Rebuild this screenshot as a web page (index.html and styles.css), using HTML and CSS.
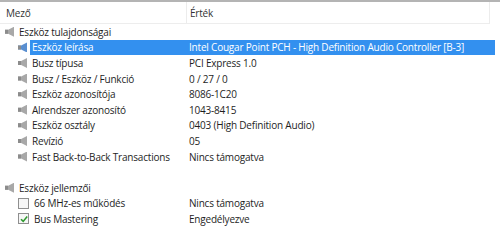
FILE: index.html
```html
<!DOCTYPE html>
<html lang="hu">
<head>
  <meta charset="UTF-8">
  <title>Eszköz tulajdonságai</title>
  <link rel="stylesheet" href="styles.css">
</head>
<body>
  <div class="list">
    <div class="header">
      <div class="col-name">Mező</div>
      <div class="col-value">Érték</div>
    </div>

    <div class="rows">
      <div class="row group">
        <div class="col-name"><span class="icon"></span>Eszköz tulajdonságai</div>
      </div>
      <div class="row child selected">
        <div class="col-name"><span class="icon"></span><span class="label">Eszköz leírása</span></div>
        <div class="col-value">Intel Cougar Point PCH - High Definition Audio Controller [B-3]</div>
      </div>
      <div class="row child">
        <div class="col-name"><span class="icon"></span>Busz típusa</div>
        <div class="col-value">PCI Express 1.0</div>
      </div>
      <div class="row child">
        <div class="col-name"><span class="icon"></span>Busz / Eszköz / Funkció</div>
        <div class="col-value">0 / 27 / 0</div>
      </div>
      <div class="row child">
        <div class="col-name"><span class="icon"></span>Eszköz azonosítója</div>
        <div class="col-value">8086-1C20</div>
      </div>
      <div class="row child">
        <div class="col-name"><span class="icon"></span>Alrendszer azonosító</div>
        <div class="col-value">1043-8415</div>
      </div>
      <div class="row child">
        <div class="col-name"><span class="icon"></span>Eszköz osztály</div>
        <div class="col-value">0403 (High Definition Audio)</div>
      </div>
      <div class="row child">
        <div class="col-name"><span class="icon"></span>Revízió</div>
        <div class="col-value">05</div>
      </div>
      <div class="row child">
        <div class="col-name"><span class="icon"></span>Fast Back-to-Back Transactions</div>
        <div class="col-value">Nincs támogatva</div>
      </div>
      <div class="row blank"></div>
      <div class="row group">
        <div class="col-name"><span class="icon"></span>Eszköz jellemzői</div>
      </div>
      <div class="row child">
        <div class="col-name"><span class="check"></span>66 MHz-es működés</div>
        <div class="col-value">Nincs támogatva</div>
      </div>
      <div class="row child">
        <div class="col-name"><span class="check on"><svg viewBox="0 0 10 10" width="10" height="10"><path d="M2 5.2 L4.2 7.4 L8.2 2.6" fill="none" stroke="#2e9a2e" stroke-width="1.6"/></svg></span>Bus Mastering</div>
        <div class="col-value">Engedélyezve</div>
      </div>
    </div>
  </div>
</body>
</html>
```

FILE: styles.css
```css
body {
  margin: 0;
  background-color: #ffffff;
  color: #1e1e1e;
  font-family: "Open Sans", "DejaVu Sans", sans-serif;
  font-size: 10px;
  letter-spacing: -0.2px;
}

.list {
  border-top: 2px solid #b4b4b4;
}

.header {
  display: flex;
  height: 21px;
  align-items: center;
  border-bottom: 1px solid #ededed;
  margin-right: 10px;
  border-right: 1px solid #ececec;
}

.header .col-name {
  width: 180px;
  padding-left: 6px;
  border-right: 1px solid #ececec;
  height: 100%;
  display: flex;
  align-items: center;
  color: #333333;
}

.header .col-value {
  padding-left: 3px;
  color: #333333;
}

.row {
  display: flex;
  height: 15.6px;
  align-items: center;
}

.row .col-name {
  width: 189px;
  display: flex;
  align-items: center;
  white-space: nowrap;
}

.row.group .col-name {
  padding-left: 5px;
  width: 184px;
}

.row.child .col-name {
  padding-left: 18px;
  width: 171px;
}

.icon {
  display: inline-block;
  width: 9px;
  height: 10px;
  margin-right: 5px;
  background: linear-gradient(to right, #8c8c8c 0 3px, transparent 3px);
  clip-path: polygon(0 30%, 35% 30%, 100% 0, 100% 100%, 35% 70%, 0 70%);
  background-color: #a8a8a8;
}

.row.selected .col-name .label {
  background-color: #3390ef;
  color: #ffffff;
  flex: 1;
  padding-left: 2px;
  line-height: 15.6px;
}

.row.selected .col-name .icon {
  background-color: #5a8fd0;
  margin-right: 3px;
}

.row.selected .col-value {
  background-color: #3390ef;
  color: #ffffff;
  line-height: 15.6px;
  width: 306px;
}

.check {
  display: inline-block;
  width: 9px;
  height: 9px;
  border: 1px solid #8f8f8f;
  background-color: #f6f6f6;
  margin-right: 5px;
}

.check svg {
  display: block;
}
```
